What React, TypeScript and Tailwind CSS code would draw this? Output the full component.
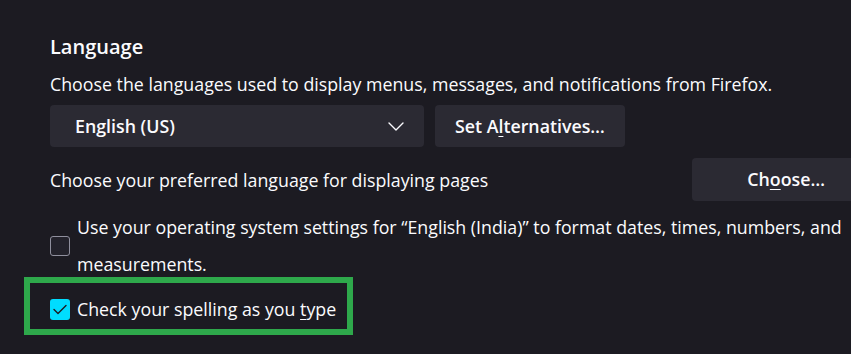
import React from 'react';

const font = { fontFamily: '"Open Sans", "Noto Sans", sans-serif' };

const Chevron: React.FC = () => (
  <svg width="16" height="9" viewBox="0 0 16 9" fill="none">
    <path d="M1 1l7 7 7-7" stroke="#fbfbfe" strokeWidth="1.4" strokeLinejoin="round" strokeLinecap="round" />
  </svg>
);

const Checkbox: React.FC<{ checked?: boolean }> = ({ checked }) =>
  checked ? (
    <span className="flex h-[21px] w-[20px] shrink-0 items-center justify-center rounded-[3px] bg-[#00ddff]">
      <svg width="14" height="11" viewBox="0 0 14 11" fill="none">
        <path d="M1 5.5l4 4L13 1.5" stroke="#1c1b22" strokeWidth="1.4" strokeLinecap="round" strokeLinejoin="round" />
      </svg>
    </span>
  ) : (
    <span className="h-[20px] w-[20px] shrink-0 rounded-[3px] border border-[#8f8f9d] bg-[#23222b]" />
  );

export default function App() {
  return (
    <div
      className="relative h-[354px] w-[851px] overflow-hidden bg-[#1c1b22] pl-[50px] pt-[33px] text-[#fbfbfe]"
      style={font}
    >
      <h1 className="text-[20px] font-semibold leading-[28px]">Language</h1>
      <p className="mt-[11px] text-[17.8px] leading-[24px]">
        Choose the languages used to display menus, messages, and notifications from Firefox.
      </p>

      <div className="mt-[9px] flex gap-[11px]">
        <div className="flex h-[42px] w-[374px] items-center justify-between rounded-[4px] bg-[#2b2a33] pl-[25px] pr-[20px]">
          <span className="text-[17.8px] font-semibold">English (US)</span>
          <Chevron />
        </div>
        <button className="h-[42px] rounded-[4px] bg-[#2b2a33] px-[20px] text-[17.8px] font-semibold">
          Set A<u className="decoration-1 underline-offset-[3px]">l</u>ternatives…
        </button>
      </div>

      <div className="mt-[11px] flex items-center justify-between">
        <span className="text-[17.8px] leading-[24px]">Choose your preferred language for displaying pages</span>
        <button className="mr-[-29px] h-[43px] rounded-[4px] bg-[#2b2a33] px-[55px] text-[17.8px] font-semibold">
          Ch<u className="decoration-1 underline-offset-[3px]">o</u>ose…
        </button>
      </div>

      <div className="mt-[8px] flex items-center gap-[7px]">
        <Checkbox />
        <p className="pr-[4px] text-[17.8px] leading-[37px]">
          Use your operating system settings for “English (India)” to format dates, times, numbers, and
          measurements.
        </p>
      </div>

      <div className="mt-[14px] flex items-center gap-[7px]">
        <Checkbox checked />
        <span className="text-[17.8px] leading-[24px]">
          Check your spelling as you <u className="decoration-1 underline-offset-[3px]">t</u>ype
        </span>
      </div>

      <div className="absolute left-[24px] top-[277px] h-[58px] w-[329px] border-[6px] border-[#2ea84b]" />
    </div>
  );
}
